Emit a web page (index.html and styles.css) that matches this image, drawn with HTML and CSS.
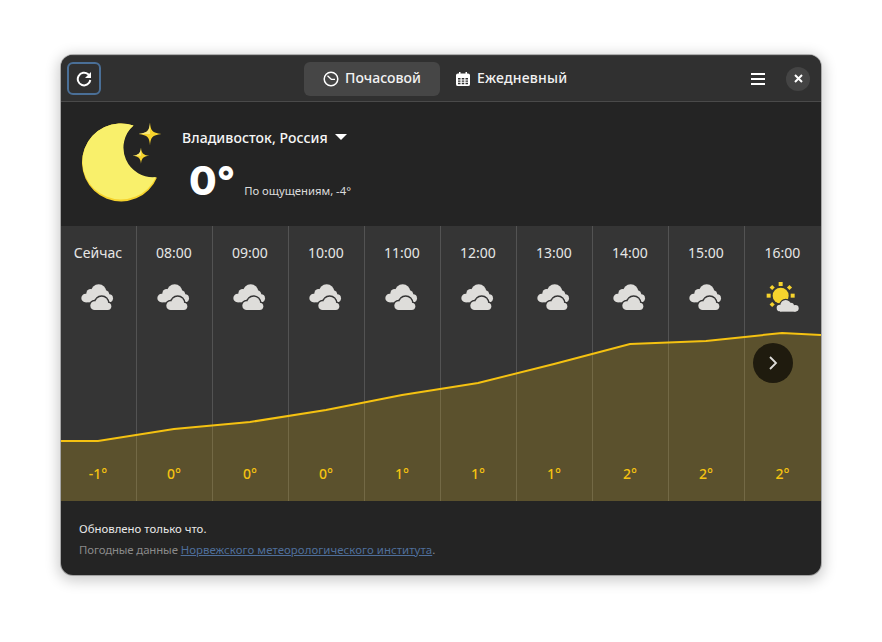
FILE: index.html
```html
<!DOCTYPE html>
<html lang="ru">
<head>
<meta charset="utf-8">
<title>Погода</title>
<link rel="stylesheet" href="styles.css">
</head>
<body>
<svg class="defs" width="0" height="0" aria-hidden="true">
  <defs>
    <g id="front-cloud">
      <circle cx="107" cy="227" r="13"/><circle cx="128" cy="219" r="19"/><circle cx="146" cy="229" r="11"/><rect x="107" y="222" width="39" height="18"/>
    </g>
    <symbol id="cloudy" viewBox="60 150 112 100">
      <g fill="#deddda">
        <circle cx="80" cy="204" r="13"/><circle cx="95" cy="190" r="13"/><circle cx="119" cy="186" r="23"/><circle cx="138" cy="194" r="13"/><circle cx="150" cy="205" r="12"/><rect x="80" y="195" width="70" height="22"/>
      </g>
      <use href="#front-cloud" fill="#353535" stroke="#353535" stroke-width="9"/>
      <use href="#front-cloud" fill="#deddda"/>
    </symbol>
    <symbol id="sunny" viewBox="190 150 112 100">
      <g fill="#f6d32d">
        <circle cx="240" cy="197" r="24"/>
        <rect x="234" y="156" width="12" height="12"/>
        <rect x="198" y="191" width="12" height="12"/>
        <rect x="270" y="191" width="12" height="12"/>
        <rect x="209" y="167" width="11" height="11" transform="rotate(45 214.500 172.500)"/>
        <rect x="261" y="167" width="11" height="11" transform="rotate(45 266.500 172.500)"/>
        <rect x="209" y="218" width="11" height="11" transform="rotate(45 214.500 223.500)"/>
      </g>
      <g fill="#353535" stroke="#353535" stroke-width="7">
        <circle cx="238" cy="233" r="10"/><circle cx="255" cy="226" r="16"/><circle cx="283" cy="234" r="11"/><rect x="238" y="228" width="46" height="17"/>
      </g>
      <g fill="#deddda">
        <circle cx="238" cy="234" r="10"/><circle cx="255" cy="226" r="16"/><circle cx="270" cy="228" r="10"/><circle cx="284" cy="235" r="10"/><rect x="238" y="230" width="46" height="15"/>
      </g>
    </symbol>
  </defs>
</svg>

<main class="window">
  <header class="headerbar">
    <button class="icon-btn refresh" aria-label="Обновить">
      <svg width="16" height="16" viewBox="0 0 16 16"><path fill="none" stroke="#fff" stroke-width="2" d="M14.300 9A6.300 6.300 0 1 1 12.200 3.300L13.500 4.500"/><path fill="#fff" d="M15 1v6H9z"/></svg>
    </button>
    <nav class="switcher">
      <button class="tab tab-active">
        <svg width="16" height="16" viewBox="0 0 16 16"><circle cx="8" cy="8" r="6.800" fill="none" stroke="#fff" stroke-width="1.500"/><path d="M4.500 4.800L8.300 8.300H12" fill="none" stroke="#fff" stroke-width="1.300"/></svg>
        <span>Почасовой</span>
      </button>
      <button class="tab tab-second">
        <svg class="cal" width="14" height="14" viewBox="0 0 14 15" preserveAspectRatio="none"><path fill="#fff" d="M3 0h1.500v1.500h5V0H11v1.500h1A2 2 0 0 1 14 3.500v9.500a2 2 0 0 1-2 2H2a2 2 0 0 1-2-2V3.500a2 2 0 0 1 2-2h1z"/><path fill="#303030" d="M2 6.500h2.500V8H2zm3.750 0h2.500V8h-2.500zm3.750 0H12V8H9.500zM2 9h2.500v1.500H2zm3.750 0h2.500v1.500h-2.500zM9.500 9H12v1.500H9.500zM2 11.500h2.500V13H2zm3.750 0h2.500V13h-2.500zm3.750 0H12V13H9.500z"/></svg>
        <span>Ежедневный</span>
      </button>
    </nav>
    <div class="end-controls">
      <button class="icon-btn menu" aria-label="Меню">
        <svg width="14" height="12" viewBox="0 0 14 12"><path fill="#fff" d="M0 0h14v2H0zM0 5h14v2H0zM0 10h14v2H0z"/></svg>
      </button>
      <button class="close" aria-label="Закрыть">
        <svg width="9" height="9" viewBox="0 0 9 9"><path d="M1 1l7 7M8 1L1 8" stroke="#fff" stroke-width="2" fill="none"/></svg>
      </button>
    </div>
  </header>

  <section class="current">
    <svg class="moon" width="84" height="86" viewBox="80 120 84 86">
      <path fill="#f6d32d" d="M133.500 125.500A39 39 0 1 0 157 177.500A29.500 29.500 0 0 1 133.500 125.500z"/>
      <path fill="#f9f06b" d="M133.500 125.500A38.500 38 0 1 0 156 177A29.500 29.500 0 0 1 133.500 125.500z"/>
      <path fill="#f6d32d" d="M150 122.500C150.500 130 152 133 161.500 134 152 135 150.500 138 150 145.500 149.500 138 148 135 138.500 134 148 133 149.500 130 150 122.500z"/>
      <path fill="#f6d32d" d="M141 147.500C141.400 153 143 155 149.300 155.800 143 156.600 141.400 158.500 141 164 140.600 158.500 139 156.600 132.500 155.800 139 155 140.600 153 141 147.500z"/>
      <path fill="#f9e97a" d="M150 122.500C149.500 130 148 133 138.500 134H150zM141 147.500C140.600 153 139 155 132.500 155.800H141z"/>
    </svg>
    <div class="current-info">
      <button class="location"><span>Владивосток, Россия</span><i class="caret"></i></button>
      <div class="temps">
        <span class="temp-now">0°</span>
        <span class="feels">По ощущениям, -4°</span>
      </div>
    </div>
  </section>

  <section class="forecast">
    <div class="columns">
      <div class="col"><span class="time">Сейчас</span><svg class="wicon"><use href="#cloudy"/></svg><span class="deg">-1°</span></div>
      <div class="col"><span class="time">08:00</span><svg class="wicon"><use href="#cloudy"/></svg><span class="deg">0°</span></div>
      <div class="col"><span class="time">09:00</span><svg class="wicon"><use href="#cloudy"/></svg><span class="deg">0°</span></div>
      <div class="col"><span class="time">10:00</span><svg class="wicon"><use href="#cloudy"/></svg><span class="deg">0°</span></div>
      <div class="col"><span class="time">11:00</span><svg class="wicon"><use href="#cloudy"/></svg><span class="deg">1°</span></div>
      <div class="col"><span class="time">12:00</span><svg class="wicon"><use href="#cloudy"/></svg><span class="deg">1°</span></div>
      <div class="col"><span class="time">13:00</span><svg class="wicon"><use href="#cloudy"/></svg><span class="deg">1°</span></div>
      <div class="col"><span class="time">14:00</span><svg class="wicon"><use href="#cloudy"/></svg><span class="deg">2°</span></div>
      <div class="col"><span class="time">15:00</span><svg class="wicon"><use href="#cloudy"/></svg><span class="deg">2°</span></div>
      <div class="col col-last"><span class="time">16:00</span><svg class="wicon"><use href="#sunny"/></svg><span class="deg">2°</span></div>
    </div>
    <svg class="chart" width="760" height="275" viewBox="0 0 760 275">
      <path fill="#f5c211" fill-opacity="0.2" d="M0 215H37L113 203 189 196 265 184 341 169 417 157 493 138 569 118 645 115 721 107 760 109V275H0z"/>
      <path fill="none" stroke="#f5c211" stroke-width="2" d="M0 215H37L113 203 189 196 265 184 341 169 417 157 493 138 569 118 645 115 721 107 760 109"/>
    </svg>
    <button class="next" aria-label="Далее">
      <svg width="10" height="14" viewBox="0 0 10 14"><path d="M2 1l6 6-6 6" fill="none" stroke="#deddda" stroke-width="1.800"/></svg>
    </button>
  </section>

  <footer class="footer">
    <p class="updated">Обновлено только что.</p>
    <p class="source">Погодные данные <a href="#">Норвежского метеорологического института</a>.</p>
  </footer>
</main>
</body>
</html>
```
FILE: styles.css
```css
* { box-sizing: border-box; }
html, body { margin: 0; padding: 0; background: #fff; }
body { width: 882px; height: 642px; padding: 55px 61px 0; overflow: hidden; font-family: "Noto Sans", "Open Sans", sans-serif; color: #fff; }
.defs { position: absolute; }
button { font: inherit; color: inherit; background: none; border: 0; padding: 0; cursor: default; display: flex; align-items: center; justify-content: center; }

.window { width: 760px; height: 520px; border-radius: 12px; overflow: hidden; background: #242424; display: flex; flex-direction: column; box-shadow: 0 3px 14px 3px rgba(0,0,0,.2), 0 0 0 1px rgba(0,0,0,.25); }

.headerbar { height: 47px; flex: none; display: flex; align-items: center; padding: 0 11px 0 6px; background: #303030; border-bottom: 1px solid #4a4a4a; border-top: 1px solid #3e3e3e; position: relative; }
.refresh { width: 34px; height: 33px; border: 2px solid #4a6f97; border-radius: 6px; }
.switcher { position: absolute; left: 243px; top: 6px; display: flex; gap: 0; }
.tab { height: 34px; gap: 6px; font-size: 14px; font-weight: 500; border-radius: 6px; color: #f2f2f2; }
.tab span { margin-top: -3px; }
.tab-active { width: 136px; background: #464646; }
.tab-second { padding: 0 16px; gap: 7px; letter-spacing: .2px; }
.cal { margin-top: -1px; }
.end-controls { margin-left: auto; display: flex; align-items: center; gap: 16px; }
.menu { width: 24px; height: 24px; }
.close { width: 24px; height: 24px; border-radius: 50%; background: #444; }

.current { height: 124px; flex: none; display: flex; padding: 18px 0 0 19px; gap: 18px; }
.moon { flex: none; }
.current-info { display: flex; flex-direction: column; padding-top: 7px; }
.location { gap: 7px; font-size: 14px; font-weight: 500; letter-spacing: .06px; height: 20px; justify-content: flex-start; color: #f6f6f6; }
.caret { width: 0; height: 0; border-left: 6px solid transparent; border-right: 6px solid transparent; border-top: 6px solid #fff; }
.temps { display: flex; align-items: baseline; margin-left: 7px; gap: 9px; margin-top: 9px; }
.temp-now { font-family: "Inter", "Noto Sans", sans-serif; font-size: 40px; font-weight: 800; line-height: 50px; }
.feels { font-size: 11.3px; color: #dcdcdc; }

.forecast { height: 275px; flex: none; background: #353535; position: relative; }
.columns { display: flex; height: 100%; }
.col { width: 76px; flex: none; border-right: 1px solid #535353; display: flex; flex-direction: column; align-items: center; padding: 17px 1px 0 0; }
.col-last { border-right: 0; }
.time { font-size: 14px; line-height: 20px; color: #e6e6e6; }
.wicon { width: 37.33px; height: 33.33px; margin-top: 17px; flex: none; }
.deg { margin-top: auto; margin-bottom: 17px; font-size: 14px; font-weight: 500; line-height: 20px; color: #f5c211; position: relative; z-index: 1; }
.chart { position: absolute; left: 0; top: 0; }
.next { position: absolute; left: 692px; top: 117px; width: 40px; height: 40px; border-radius: 50%; background: #1f1b0e; }

.footer { flex: 1; padding: 20px 18px 0; font-size: 11.4px; }
.footer p { margin: 0; line-height: 15px; }
.updated { color: #e8e8e8; }
.source { color: #8a8a8a; margin-top: 6px !important; letter-spacing: -.12px; }
.source a { color: #4f6f9b; letter-spacing: .07px; }
```
